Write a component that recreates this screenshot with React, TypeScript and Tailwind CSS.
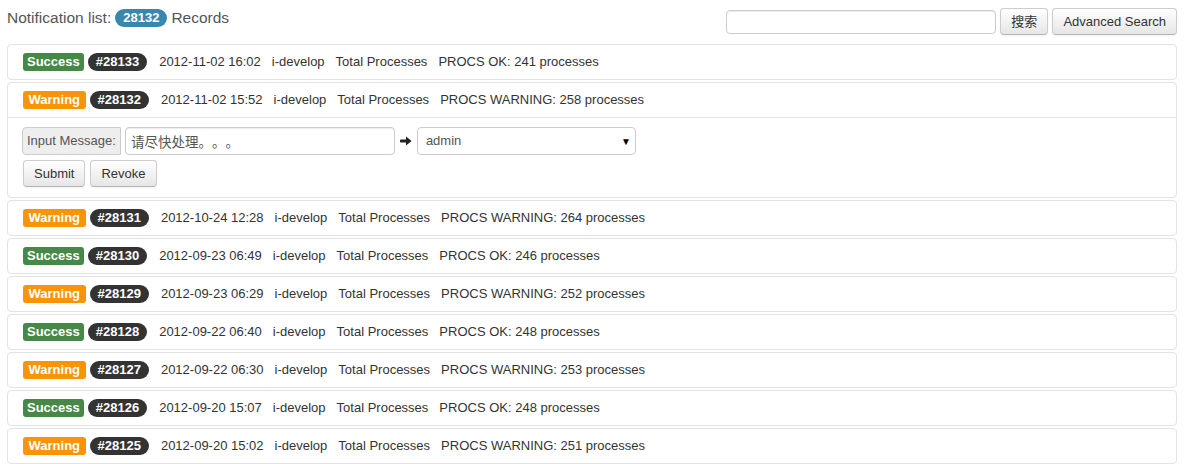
import { useState } from 'react';

type Row = {
  id: number;
  level: 'Success' | 'Warning';
  time: string;
  output: string;
};

const rows: Row[] = [
  { id: 28133, level: 'Success', time: '2012-11-02 16:02', output: 'PROCS OK: 241 processes' },
  { id: 28132, level: 'Warning', time: '2012-11-02 15:52', output: 'PROCS WARNING: 258 processes' },
  { id: 28131, level: 'Warning', time: '2012-10-24 12:28', output: 'PROCS WARNING: 264 processes' },
  { id: 28130, level: 'Success', time: '2012-09-23 06:49', output: 'PROCS OK: 246 processes' },
  { id: 28129, level: 'Warning', time: '2012-09-23 06:29', output: 'PROCS WARNING: 252 processes' },
  { id: 28128, level: 'Success', time: '2012-09-22 06:40', output: 'PROCS OK: 248 processes' },
  { id: 28127, level: 'Warning', time: '2012-09-22 06:30', output: 'PROCS WARNING: 253 processes' },
  { id: 28126, level: 'Success', time: '2012-09-20 15:07', output: 'PROCS OK: 248 processes' },
  { id: 28125, level: 'Warning', time: '2012-09-20 15:02', output: 'PROCS WARNING: 251 processes' },
];

const btn =
  'h-[27px] px-[10px] text-[13px] leading-[15px] text-[#333] rounded-[4px] border border-[#ccc] border-b-[#b3b3b3] bg-gradient-to-b from-white to-[#e6e6e6] shadow-[inset_0_1px_0_rgba(255,255,255,0.2),0_1px_2px_rgba(0,0,0,0.05)]';

function ArrowRight() {
  return (
    <svg width="12" height="10" viewBox="0 0 12 10" className="mx-[5px]">
      <rect x="0" y="3.5" width="7" height="3" rx="0.8" fill="#222" />
      <path d="M6 0.6 L11.6 5 L6 9.4 Z" fill="#222" />
    </svg>
  );
}

function RowHeader({ r }: { r: Row }) {
  return (
    <div className="h-[34px] flex items-center pl-[15px] text-[13px] text-[#333]">
      <span
        className={`h-[18px] leading-[18px] rounded-[3px] font-bold text-white text-[13px] ${
          r.level === 'Success' ? 'bg-[#468847] px-[4px]' : 'bg-[#f89406] px-[5.5px]'
        }`}
      >
        {r.level}
      </span>
      <span className="ml-[4px] h-[18px] leading-[18px] px-[8px] rounded-full font-bold text-white bg-[#333] text-[13px]">
        #{r.id}
      </span>
      <div className="ml-[12px] flex gap-[11px] leading-[18px]">
        <span>{r.time}</span>
        <span>i-develop</span>
        <span>Total Processes</span>
        <span>{r.output}</span>
      </div>
    </div>
  );
}

export default function App() {
  const [message, setMessage] = useState('请尽快处理。。。');
  const [query, setQuery] = useState('');

  return (
    <div className="w-[1190px] h-[464px] bg-white font-['Liberation_Sans','Noto_Sans_CJK_SC',sans-serif] overflow-hidden">
      <div className="w-[1170px] ml-[7px]">
        <div className="h-[44px] flex items-start justify-between">
          <div className="flex items-center h-[36px] text-[15.5px] text-[#555]">
            <span>Notification list:</span>
            <span className="ml-[4px] h-[18px] leading-[18px] px-[8px] rounded-full bg-[#3a87ad] text-white text-[13px] font-bold">
              28132
            </span>
            <span className="ml-[4px]">Records</span>
          </div>
          <div className="flex items-center gap-[4px] pt-[8px]">
            <input
              value={query}
              onChange={e => setQuery(e.target.value)}
              className="w-[270px] h-[24px] border border-[#ccc] rounded-[4px] px-[6px] text-[13px] text-[#555] outline-none shadow-[inset_0_1px_1px_rgba(0,0,0,0.075)]"
            />
            <button className={btn}>搜索</button>
            <button className={btn}>Advanced Search</button>
          </div>
        </div>

        {rows.map(r => (
          <div key={r.id} className="mb-[2px] border border-[#e3e3e3] rounded-[4px] bg-white">
            <RowHeader r={r} />
            {r.id === 28132 && (
              <div className="border-t border-[#e3e3e3] pt-[9px] pb-[10px] pl-[14px]">
                <div className="flex items-center">
                  <span className="h-[28px] leading-[26px] px-[4px] bg-[#eee] border border-[#ccc] rounded-l-[4px] text-[13px] text-[#555]">
                    Input Message:
                  </span>
                  <input
                    value={message}
                    onChange={e => setMessage(e.target.value)}
                    className="ml-[4px] w-[270px] h-[28px] border border-[#ccc] rounded-[4px] px-[5px] text-[13.5px] text-[#555] outline-none [text-spacing-trim:space-all] shadow-[inset_0_1px_1px_rgba(0,0,0,0.075)]"
                  />
                  <ArrowRight />
                  <div className="w-[219px] h-[28px] border border-[#ccc] rounded-[4px] flex items-center justify-between pl-[8px] pr-[4px] text-[13px] text-[#555] bg-white">
                    <span>admin</span>
                    <span className="text-[10px] text-black">▼</span>
                  </div>
                </div>
                <div className="flex gap-[5px] mt-[5px] ml-[1px]">
                  <button className={btn}>Submit</button>
                  <button className={btn}>Revoke</button>
                </div>
              </div>
            )}
          </div>
        ))}
      </div>
    </div>
  );
}
